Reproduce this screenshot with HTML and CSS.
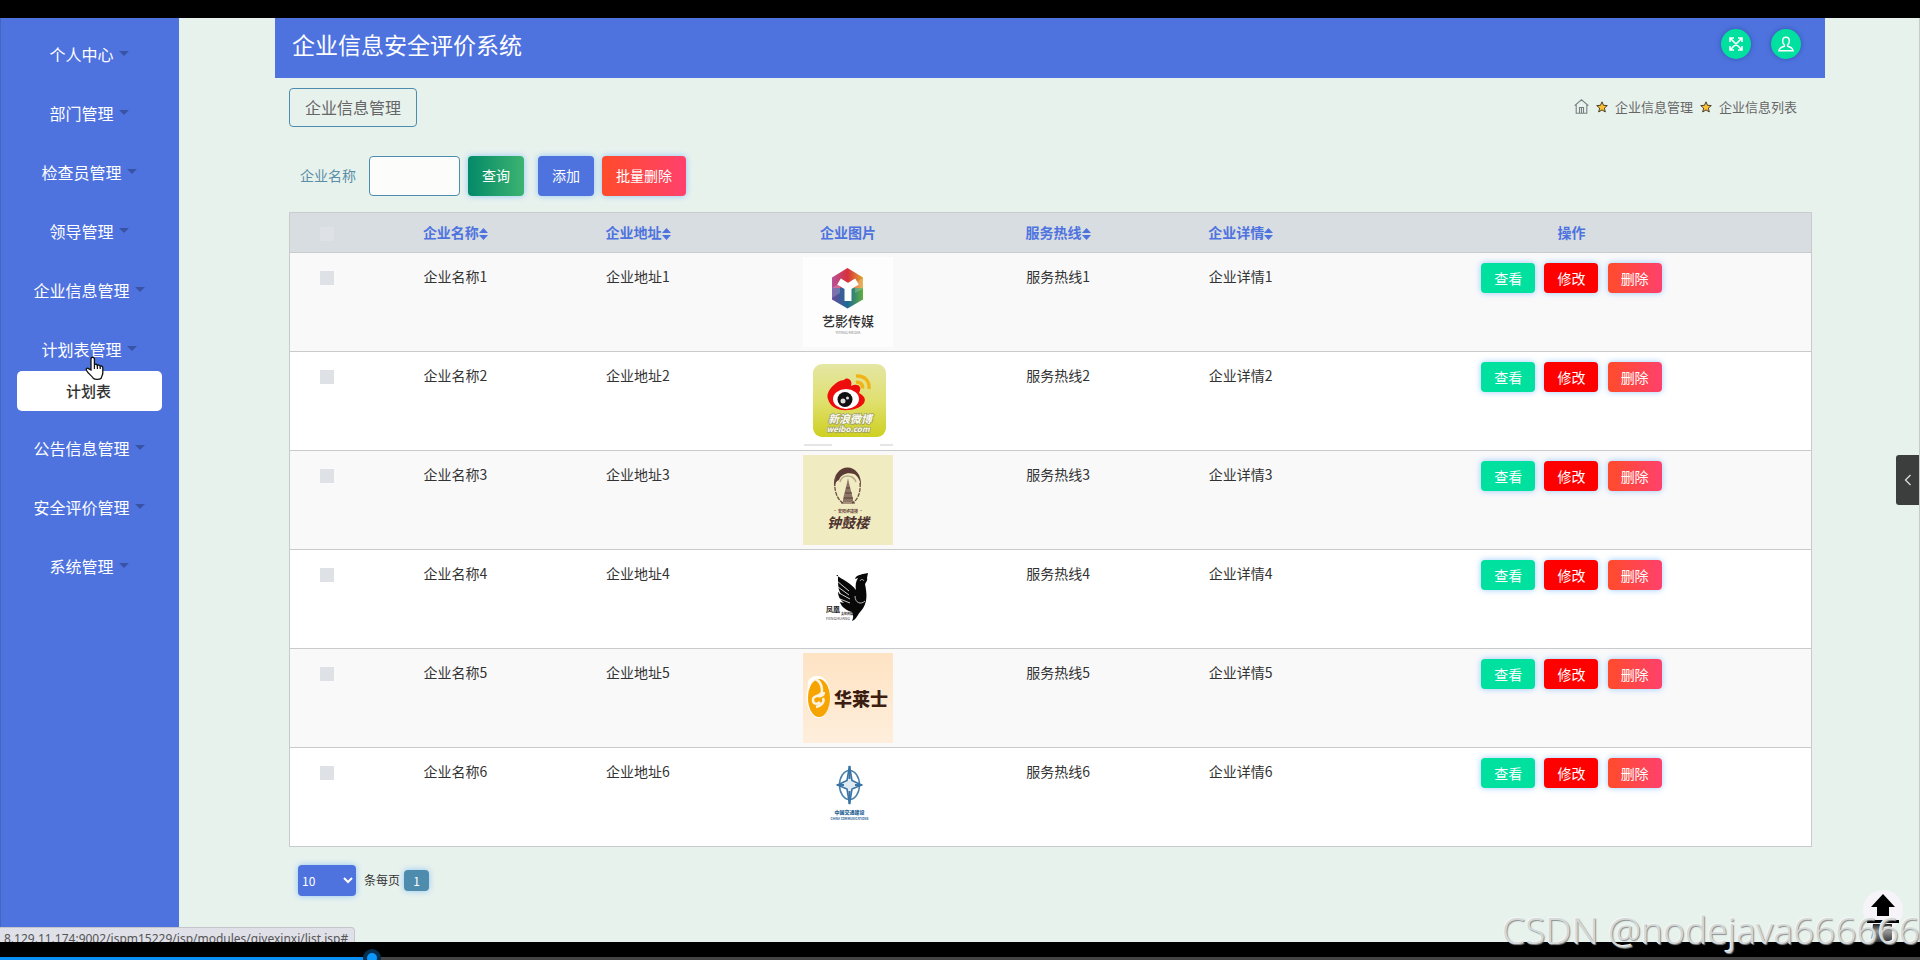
FILE: index.html
```html
<!DOCTYPE html>
<html lang="zh-CN">
<head>
    <meta charset="UTF-8">
    <meta name="viewport" content="width=device-width, initial-scale=1.0">
    <title>企业信息安全评价系统</title>
    <link rel="stylesheet" href="styles.css">
</head>
<body>
    <div class="screen">
        <nav class="sidebar">
            <ul class="menu">
                <li><a href="#">个人中心<span class="caret"></span></a></li>
                <li><a href="#">部门管理<span class="caret"></span></a></li>
                <li><a href="#">检查员管理<span class="caret"></span></a></li>
                <li><a href="#">领导管理<span class="caret"></span></a></li>
                <li><a href="#">企业信息管理<span class="caret"></span></a></li>
                <li class="open">
                    <a href="#">计划表管理<span class="caret"></span></a>
                    <a href="#" class="submenu">计划表</a>
                    <svg class="cursor" width="20" height="25" viewBox="0 0 20 25">
                        <path d="M6 14V3.2C6 .6 9.4.6 9.4 3.2V9c.4-1.200 2.800-1 3 .6.6-1 2.600-.6 2.800.8.8-.8 2.600-.3 2.600 1.400V17c0 2-1.200 3-1.600 5.200-1.500 1.600-6.500 1.600-8 0C6.500 19.500 3 17.500 1.400 14.200c-.7-1.700 1.200-2.700 2.500-1.300z" fill="#fff" stroke="#111" stroke-width="1.300"/>
                        <path d="M9.400 9v4M12.400 9.600V13M15.200 10.400V13" stroke="#111" stroke-width="1.200"/>
                    </svg>
                </li>
                <li><a href="#">公告信息管理<span class="caret"></span></a></li>
                <li><a href="#">安全评价管理<span class="caret"></span></a></li>
                <li><a href="#">系统管理<span class="caret"></span></a></li>
            </ul>
        </nav>

        <main class="content">
            <header class="topbar">
                <h1>企业信息安全评价系统</h1>
                <div class="tools">
                    <button type="button" class="round" aria-label="全屏">
                        <svg width="14" height="14" viewBox="0 0 14 14" fill="none" stroke="#fff" stroke-width="1.600">
                            <path d="M1 5V1h4M9 1h4v4M13 9v4H9M5 13H1V9M1.500 1.500l11 11M12.500 1.500l-11 11"/>
                        </svg>
                    </button>
                    <button type="button" class="round" aria-label="用户">
                        <svg width="16" height="16" viewBox="0 0 16 16" fill="none" stroke="#fff" stroke-width="1.400">
                            <path d="M8 1.200c-2.200 0-3.300 1.700-3.300 3.700 0 1.600.6 3.100 1.700 3.900v1.500C3.500 11 1.500 12 .9 14.700h14.200C14.500 12 12.500 11 9.600 10.300V8.800c1.100-.8 1.700-2.300 1.700-3.900 0-2-1.100-3.700-3.300-3.700z"/>
                        </svg>
                    </button>
                </div>
            </header>

            <div class="page">
                <div class="page-head">
                    <h2>企业信息管理</h2>
                    <div class="breadcrumb">
                        <svg width="15" height="15" viewBox="0 0 15 15" fill="none" stroke="#777f80" stroke-width="1.100">
                            <path d="M.6 6.600 7.500.8l6.900 5.800M2.200 5.500v8.700h10.600V5.500M5.500 14V8.500h4V14M7.500 9v5"/>
                        </svg>
                        <svg class="star" width="12" height="12" viewBox="0 0 12 12">
                            <path d="M6 .8l1.500 3.500 3.800.3-2.900 2.500.9 3.900L6 8.900 2.700 11l.9-3.900L.7 4.600l3.800-.3z" fill="#fdc02f" stroke="#4a4030" stroke-width="1"/>
                        </svg>
                        <a href="#">企业信息管理</a>
                        <svg class="star" width="12" height="12" viewBox="0 0 12 12">
                            <path d="M6 .8l1.500 3.500 3.800.3-2.900 2.500.9 3.900L6 8.900 2.700 11l.9-3.900L.7 4.600l3.800-.3z" fill="#fdc02f" stroke="#4a4030" stroke-width="1"/>
                        </svg>
                        <span>企业信息列表</span>
                    </div>
                </div>

                <form class="search">
                    <label for="qiyemingcheng">企业名称</label>
                    <input type="text" id="qiyemingcheng" name="qiyemingcheng">
                    <button type="button" class="btn btn-search">查询</button>
                    <button type="button" class="btn btn-add">添加</button>
                    <button type="button" class="btn btn-delete">批量删除</button>
                </form>

                <table class="list">
                    <colgroup>
                        <col class="col-check">
                        <col class="col-text">
                        <col class="col-text">
                        <col class="col-image">
                        <col class="col-text">
                        <col class="col-text">
                        <col>
                    </colgroup>
                    <thead>
                        <tr>
                            <th><input type="checkbox" aria-label="全选"></th>
                            <th>企业名称<svg class="sort" width="9" height="12" viewBox="0 0 9 12"><path d="M0 5l4.500-5L9 5zM0 7l4.500 5L9 7z"/></svg></th>
                            <th>企业地址<svg class="sort" width="9" height="12" viewBox="0 0 9 12"><path d="M0 5l4.500-5L9 5zM0 7l4.500 5L9 7z"/></svg></th>
                            <th>企业图片</th>
                            <th>服务热线<svg class="sort" width="9" height="12" viewBox="0 0 9 12"><path d="M0 5l4.500-5L9 5zM0 7l4.500 5L9 7z"/></svg></th>
                            <th>企业详情<svg class="sort" width="9" height="12" viewBox="0 0 9 12"><path d="M0 5l4.500-5L9 5zM0 7l4.500 5L9 7z"/></svg></th>
                            <th>操作</th>
                        </tr>
                    </thead>
                    <tbody>
                        <tr>
                            <td><input type="checkbox" aria-label="选择1"></td>
                            <td>企业名称1</td>
                            <td>企业地址1</td>
                            <td class="pic">
                                <svg width="90" height="90" viewBox="0 0 90 90">
                                    <defs>
                                        <linearGradient id="hexTop" x1="0" y1="0" x2="1" y2="0">
                                            <stop offset="0" stop-color="#b5529c"/>
                                            <stop offset=".5" stop-color="#d8303c"/>
                                            <stop offset="1" stop-color="#e0a62c"/>
                                        </linearGradient>
                                        <linearGradient id="hexLow" x1="0" y1="0" x2="1" y2="0">
                                            <stop offset="0" stop-color="#6a4a9c"/>
                                            <stop offset=".5" stop-color="#1c6a94"/>
                                            <stop offset="1" stop-color="#5fae3c"/>
                                        </linearGradient>
                                    </defs>
                                    <rect width="90" height="90" fill="#fdfdfd"/>
                                    <path d="M44.500 11 60 20.500V32H29V20.500z" fill="url(#hexTop)"/>
                                    <path d="M29 31h31v11.500L44.500 51.500 29 42.500z" fill="url(#hexLow)"/>
                                    <path d="M29 31l8-5v10l-8 5zM52 26l8-5v11l-8 4z" fill="#fff" opacity=".2"/>
                                    <path d="M36 24.500l9 5.500 9-5.500M45 30v14" fill="none" stroke="#fff" stroke-width="7" stroke-linejoin="round"/>
                                    <text x="45" y="69" text-anchor="middle" font-size="13" font-weight="500" fill="#333">艺影传媒</text>
                                    <text x="45" y="77" text-anchor="middle" font-size="4" fill="#888">YIYING MEDIA</text>
                                </svg>
                            </td>
                            <td>服务热线1</td>
                            <td>企业详情1</td>
                            <td class="actions">
                                <button type="button" class="btn btn-view">查看</button>
                                <button type="button" class="btn btn-edit">修改</button>
                                <button type="button" class="btn btn-delete">删除</button>
                            </td>
                        </tr>
                        <tr>
                            <td><input type="checkbox" aria-label="选择2"></td>
                            <td>企业名称2</td>
                            <td>企业地址2</td>
                            <td class="pic">
                                <svg width="90" height="90" viewBox="0 0 90 90">
                                    <defs>
                                        <linearGradient id="weibo" x1="0" y1="0" x2="0" y2="1">
                                            <stop offset="0" stop-color="#e4e6a4"/>
                                            <stop offset=".5" stop-color="#e0e070"/>
                                            <stop offset="1" stop-color="#ced020"/>
                                        </linearGradient>
                                    </defs>
                                    <rect width="90" height="90" fill="#fff"/>
                                    <rect x="10" y="8" width="73" height="73" rx="9" fill="url(#weibo)"/>
                                    <path d="M25 43c-3-8 9-19 16-19 4-4 9 1 7 6 6-3 12 0 8 7 12 6 4 16-10 17-11 1-19-3-21-11z" fill="#ee0d0d"/>
                                    <ellipse cx="43" cy="43" rx="13" ry="10" fill="#fff"/>
                                    <circle cx="42" cy="43.500" r="7.500" fill="#111"/>
                                    <circle cx="40" cy="45" r="2.500" fill="#ddd"/>
                                    <circle cx="44.500" cy="42" r="1.500" fill="#ddd"/>
                                    <path d="M53 20c8-1 14 5 13 13M53 26.500c4-1 7 2 6.500 6" fill="none" stroke="#f0b418" stroke-width="3.500"/>
                                    <g text-anchor="middle" font-weight="700" font-style="italic" fill="#fafaf4" stroke="#a0a060" stroke-width="1.500" paint-order="stroke">
                                        <text x="47" y="67" font-size="11">新浪微博</text>
                                        <text x="45" y="76" font-size="8">weibo.com</text>
                                    </g>
                                    <path d="M1 89h28M77 89h13" stroke="#ddd" stroke-width="1.500"/>
                                </svg>
                            </td>
                            <td>服务热线2</td>
                            <td>企业详情2</td>
                            <td class="actions">
                                <button type="button" class="btn btn-view">查看</button>
                                <button type="button" class="btn btn-edit">修改</button>
                                <button type="button" class="btn btn-delete">删除</button>
                            </td>
                        </tr>
                        <tr>
                            <td><input type="checkbox" aria-label="选择3"></td>
                            <td>企业名称3</td>
                            <td>企业地址3</td>
                            <td class="pic">
                                <svg width="90" height="90" viewBox="0 0 90 90">
                                    <rect width="90" height="90" fill="#f0ebc0"/>
                                    <path d="M31 32C29 6 60 6 58 32c-1-7-3-11-7-13-6-2-13 0-15 6-3 1-4 4-5 7z" fill="#5a3a35"/>
                                    <path d="M33 22c-3 10 0 22 7 26M57 28c1 10-3 18-8 20" fill="none" stroke="#6a4a42" stroke-width="1.300" stroke-dasharray="4 1"/>
                                    <path d="M37 27c2-8 13-8 16 0" fill="none" stroke="#b9a890" stroke-width="1.500"/>
                                    <path d="M45 23l1 5 2 8 2 8v3H40v-3l2-8 2-8z" fill="#8d7668"/>
                                    <path d="M38 48h14M41 43h9M42 38h7M43 33h4" stroke="#5a3a35"/>
                                    <text x="45" y="58" text-anchor="middle" font-size="4" font-weight="700" fill="#6a4a42">· 安阳钟鼓楼 ·</text>
                                    <text x="45" y="73" text-anchor="middle" font-size="14" font-weight="700" font-style="italic" fill="#4f332f">钟鼓楼</text>
                                </svg>
                            </td>
                            <td>服务热线3</td>
                            <td>企业详情3</td>
                            <td class="actions">
                                <button type="button" class="btn btn-view">查看</button>
                                <button type="button" class="btn btn-edit">修改</button>
                                <button type="button" class="btn btn-delete">删除</button>
                            </td>
                        </tr>
                        <tr>
                            <td><input type="checkbox" aria-label="选择4"></td>
                            <td>企业名称4</td>
                            <td>企业地址4</td>
                            <td class="pic">
                                <svg width="90" height="90" viewBox="0 0 90 90">
                                    <rect width="90" height="90" fill="#fff"/>
                                    <path d="M33 21c7 5 15 8 20 15-1-5 0-9 2-12l-3 1c1-4 5-4 8-5l5-1-1 5c1 2-1 4-2 6 2 10 3 19-4 27-4 4-4 8-9 10 2-4 1-6 0-9-7-2-11-6-12-10l4 1c-4-3-6-7-6-11l3 2c-3-5-3-8-3-19z" fill="#080808"/>
                                    <path d="M34 27l12 10M35 33l11 8M36 39l11 6M37 45l10 4" stroke="#fff" stroke-width=".8"/>
                                    <path d="M57 27c1-2 3-2 4 0M52 42c0 7 6 9 10 5" fill="none" stroke="#bbb" stroke-width="1"/>
                                    <text x="23" y="58" font-size="7" font-weight="700" fill="#222">凤凰</text>
                                    <text x="38" y="61" font-size="3" font-weight="700" fill="#222">文化传媒</text>
                                    <text x="23" y="66" font-size="4" fill="#444">FENGHUANG</text>
                                </svg>
                            </td>
                            <td>服务热线4</td>
                            <td>企业详情4</td>
                            <td class="actions">
                                <button type="button" class="btn btn-view">查看</button>
                                <button type="button" class="btn btn-edit">修改</button>
                                <button type="button" class="btn btn-delete">删除</button>
                            </td>
                        </tr>
                        <tr>
                            <td><input type="checkbox" aria-label="选择5"></td>
                            <td>企业名称5</td>
                            <td>企业地址5</td>
                            <td class="pic">
                                <svg width="90" height="90" viewBox="0 0 90 90">
                                    <defs>
                                        <linearGradient id="peach" x1="0" y1="0" x2="0" y2="1">
                                            <stop offset="0" stop-color="#fee3c4"/>
                                            <stop offset="1" stop-color="#feeedb"/>
                                        </linearGradient>
                                    </defs>
                                    <rect width="90" height="90" fill="url(#peach)"/>
                                    <ellipse cx="15.500" cy="44" rx="12" ry="21" fill="#fff"/>
                                    <ellipse cx="16" cy="45" rx="11" ry="19" fill="#f7a400"/>
                                    <path d="M6 28c7-6 13 2 13 10 0 6-10 4-9 9 0 4 4 5 7 2M15 43c3 1 6-1 6-4M13 54c5-1 9-5 7-9" fill="none" stroke="#fff3e0" stroke-width="2.500"/>
                                    <path d="M4 38c0-8 6-12 12-13-3-3-8-2-11 4z" fill="#fff"/>
                                    <text x="58" y="53" text-anchor="middle" font-size="18" font-weight="900" fill="#3c1d12">华莱士</text>
                                </svg>
                            </td>
                            <td>服务热线5</td>
                            <td>企业详情5</td>
                            <td class="actions">
                                <button type="button" class="btn btn-view">查看</button>
                                <button type="button" class="btn btn-edit">修改</button>
                                <button type="button" class="btn btn-delete">删除</button>
                            </td>
                        </tr>
                        <tr>
                            <td><input type="checkbox" aria-label="选择6"></td>
                            <td>企业名称6</td>
                            <td>企业地址6</td>
                            <td class="pic">
                                <svg width="90" height="90" viewBox="0 0 90 90">
                                    <rect width="90" height="90" fill="#fff"/>
                                    <ellipse cx="46.500" cy="33" rx="10" ry="14.500" fill="none" stroke="#4a80ac" stroke-width="1.500"/>
                                    <path d="M46.500 14l2.500 14.500 9.500 4.500-9.500 4-2.500 15-2.500-15-9.500-4 9.500-4.500z" fill="#dfeaf3" stroke="#3a74a4" stroke-width="1.600"/>
                                    <path d="M46.500 14v13M46.500 39v13M34 33h7M52 33h7" stroke="#3a74a4" stroke-width="2"/>
                                    <text x="46.500" y="62" text-anchor="middle" font-size="5" font-weight="900" fill="#2c6698">中国交通建设</text>
                                    <text x="46.500" y="68" text-anchor="middle" font-size="3" font-weight="700" fill="#2c6698">CHINA COMMUNICATIONS</text>
                                </svg>
                            </td>
                            <td>服务热线6</td>
                            <td>企业详情6</td>
                            <td class="actions">
                                <button type="button" class="btn btn-view">查看</button>
                                <button type="button" class="btn btn-edit">修改</button>
                                <button type="button" class="btn btn-delete">删除</button>
                            </td>
                        </tr>
                    </tbody>
                </table>

                <div class="pager">
                    <select id="pageSize">
                        <option>10</option>
                        <option>25</option>
                        <option>50</option>
                    </select>
                    <label for="pageSize">条每页</label>
                    <button type="button" class="page-no">1</button>
                </div>
            </div>
        </main>

        <button type="button" class="drawer" aria-label="展开">
            <svg width="8" height="12" viewBox="0 0 8 12" fill="none" stroke="#ddd" stroke-width="1.300"><path d="M6.500 1 1.500 6l5 5"/></svg>
        </button>

        <a href="#" class="to-top" aria-label="返回顶部">
            <svg width="40" height="52" viewBox="0 0 40 52">
                <defs>
                    <linearGradient id="shade" x1="0" y1="0" x2="0" y2="1">
                        <stop offset="0" stop-color="#222"/>
                        <stop offset=".4" stop-color="#999"/>
                        <stop offset="1" stop-color="#333"/>
                    </linearGradient>
                </defs>
                <circle cx="20" cy="20" r="20" fill="#f6f4f8"/>
                <path d="M9 28h22v24H9z" fill="#f6f4f8"/>
                <path d="M20 4l12 13h-6v9H14v-9H8z"/>
                <path d="M4 30h32v3H4z"/>
                <path d="M10 34h19v18H8z" fill="url(#shade)"/>
            </svg>
        </a>

        <div class="status">8.129.11.174:9002/jspm15229/jsp/modules/qiyexinxi/list.jsp#</div>
    </div>

    <div class="player">
        <div class="progress">
            <div class="played"></div>
        </div>
    </div>
    <div class="watermark">CSDN @nodejava666666</div>
</body>
</html>
```
FILE: styles.css
```css
:root {
    --primary: #4e73df;
    --teal: #4e8cae;
    --green: #00e09f;
    --bg: #e8f2ed;
    --line: #c8cacc;
}

* {
    box-sizing: border-box;
    margin: 0;
    padding: 0;
}

body {
    position: relative;
    display: flex;
    flex-direction: column;
    height: 100vh;
    overflow: hidden;
    padding-top: 18px;
    background: #000;
    color: #333;
    font-family: "Noto Sans CJK SC", sans-serif;
    font-size: 14px;
}

a {
    color: inherit;
    text-decoration: none;
}

button,
input,
select {
    font-family: inherit;
}

button {
    border: none;
    cursor: pointer;
}

.screen {
    position: relative;
    display: flex;
    flex: 1;
    min-height: 0;
    overflow: hidden;
    background: var(--bg);
    border-right: 1px solid var(--line);
}

/* sidebar */
.sidebar {
    flex: none;
    width: 179px;
    padding-top: 7px;
    background: var(--primary);
    border-left: 1px solid #4565c4;
}

.menu {
    list-style: none;
}

.menu li {
    position: relative;
    padding: 8px 0;
}

.menu a {
    display: flex;
    align-items: center;
    justify-content: center;
    height: 43px;
    padding: 0 2px 2px 0;
    color: #fff;
    font-size: 16px;
}

.caret {
    margin-left: 5px;
    border: 5px solid transparent;
    border-top-color: #3853a6;
    border-bottom: none;
}

.menu .submenu {
    height: 40px;
    margin: 0 17px 0 16px;
    border-radius: 5px;
    background: #fff;
    color: #333;
    font-size: 15px;
    font-weight: 500;
}

.cursor {
    position: absolute;
    top: 36px;
    left: 84px;
}

/* header */
.content {
    flex: 1;
    min-width: 0;
    padding: 0 94px 0 96px;
}

.topbar {
    display: flex;
    justify-content: space-between;
    height: 60px;
    padding: 0 24px 8px 17px;
    background: var(--primary);
}

.topbar h1 {
    align-self: center;
    color: #fff;
    font-size: 23px;
    font-weight: 400;
}

.tools {
    display: flex;
    align-items: center;
    gap: 20px;
}

.round {
    display: flex;
    align-items: center;
    justify-content: center;
    width: 30px;
    height: 30px;
    border-radius: 50%;
    background: var(--green);
    box-shadow: 0 0 5px rgba(30, 50, 120, 0.5);
}

.page {
    padding: 10px 13px 0 14px;
}

.page-head {
    display: flex;
    align-items: center;
    justify-content: space-between;
}

.page-head h2 {
    height: 39px;
    padding: 0 15px;
    border: 1px solid var(--teal);
    border-radius: 4px;
    color: #666;
    font-size: 16px;
    font-weight: 400;
    line-height: 36px;
}

.breadcrumb {
    display: flex;
    align-items: center;
    gap: 7px;
    padding: 0 15px 2px 0;
    color: #666;
    font-size: 13px;
}

/* search form */
.search {
    display: flex;
    align-items: center;
    gap: 8px;
    margin: 29px 0 16px 11px;
}

.search label {
    margin-right: 5px;
    padding-bottom: 2px;
    color: #5b8fa8;
}

.search input {
    width: 91px;
    height: 40px;
    padding: 0 8px;
    border: 1px solid var(--teal);
    border-radius: 4px;
    background: #fcfdfb;
}

.btn {
    height: 40px;
    padding: 0 14px 2px;
    border-radius: 4px;
    color: #fff;
    font-size: 14px;
    box-shadow: 0 0 6px rgba(90, 170, 255, 0.6);
}

.btn-search {
    margin-right: 6px;
    background: linear-gradient(to right, #048a68, #3cb371);
}

.btn-add {
    background: var(--primary);
}

.btn-delete {
    background: linear-gradient(to right, #ff4b2b, #ff416c);
}

.btn-view {
    background: var(--green);
}

.btn-edit {
    background: #ff0000;
}

/* table */
.list {
    width: 100%;
    table-layout: fixed;
    border-collapse: collapse;
    border: 1px solid var(--line);
    text-align: center;
}

.col-check {
    width: 4.900%;
}

.col-text {
    width: 12%;
}

.col-image {
    width: 15.600%;
}

.list th {
    height: 40px;
    padding-bottom: 2px;
    background: #d8dde1;
    color: var(--primary);
    font-weight: 700;
}

.list tr {
    border-bottom: 1px solid var(--line);
}

.list tbody tr {
    background: #fff;
}

.list tbody tr:nth-child(odd) {
    background: #f9f9fa;
}

.list td {
    padding-top: 13px;
    line-height: 20px;
    vertical-align: top;
}

.list td.pic {
    padding: 4px 0;
}

.list td.actions {
    padding-top: 10px;
}

.list svg {
    vertical-align: middle;
}

.pic svg {
    display: block;
    margin: 0 auto;
}

.sort {
    fill: var(--primary);
}

.list input {
    appearance: none;
    width: 14px;
    height: 14px;
    background: #dee2e6;
    vertical-align: middle;
}

.actions .btn {
    height: 30px;
    padding: 0 13px 1px;
    margin: 0 3px;
}

/* pager */
.pager {
    display: flex;
    align-items: center;
    margin: 18px 0 0 9px;
    font-size: 12px;
}

.pager select {
    width: 58px;
    height: 31px;
    border: none;
    border-radius: 4px;
    background: var(--primary);
    color: #fff;
    font-size: 12px;
    box-shadow: 0 0 6px rgba(90, 170, 255, 0.6);
}

.pager label {
    margin: 0 4px 0 8px;
    padding-bottom: 2px;
}

.page-no {
    width: 25px;
    height: 21px;
    border-radius: 4px;
    background: var(--teal);
    color: #fff;
    font-size: 12px;
    line-height: 20px;
    box-shadow: 0 0 6px rgba(90, 170, 255, 0.6);
}

/* overlays */
.drawer {
    position: absolute;
    top: 437px;
    right: -1px;
    width: 24px;
    height: 50px;
    border-radius: 3px 0 0 3px;
    background: #3c3e3d;
}

.to-top {
    position: absolute;
    right: 16px;
    bottom: 0;
    height: 52px;
}

.status {
    position: absolute;
    left: 0;
    bottom: -7px;
    height: 22px;
    padding: 0 6px 0 4px;
    border: 1px solid #c4c6cc;
    border-left: none;
    border-radius: 0 4px 0 0;
    background: #dfe0e8;
    color: #555;
    font-family: "Noto Sans", sans-serif;
    font-size: 12px;
    line-height: 21px;
}

.player {
    display: flex;
    flex: none;
    align-items: flex-end;
    height: 18px;
}

.progress {
    flex: 1;
    height: 3px;
    background: #444;
}

.played {
    position: relative;
    width: 19.400%;
    height: 3px;
    background: #0a90f5;
}

.played::after {
    content: "";
    position: absolute;
    top: -4px;
    right: -5px;
    width: 10px;
    height: 10px;
    border-radius: 50%;
    background: #0a98ff;
    box-shadow: 0 0 0 4px #06304f;
}

.watermark {
    position: absolute;
    right: 0;
    bottom: 6px;
    color: #d4d8d8;
    font-family: "Noto Sans", sans-serif;
    font-size: 37px;
    font-weight: 300;
    line-height: 48px;
    text-shadow: 1px 1px 1px #8a8e8e, -1px -1px 0 #f4f6f6;
}
```
